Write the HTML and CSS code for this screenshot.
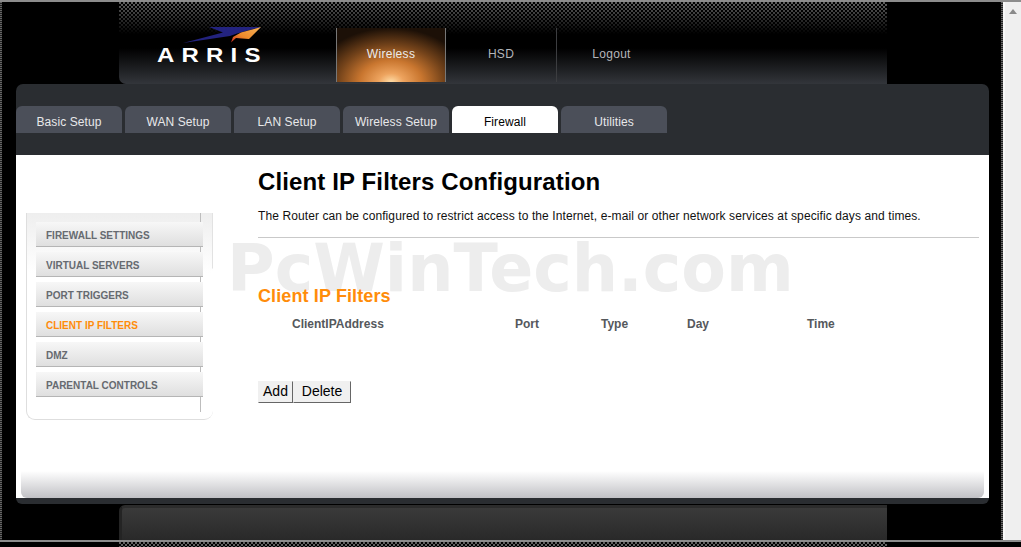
FILE: index.html
```html
<!DOCTYPE html>
<html lang="en">
<head>
<meta charset="utf-8">
<title>Client IP Filters Configuration</title>
<link rel="stylesheet" href="styles.css">
</head>
<body>
<div class="topline"></div>
<div class="window">
  <div class="edge"></div>
  <div class="viewport">
    <header class="masthead">
      <div class="logo">
        <svg class="swoosh" width="82" height="20" viewBox="180 25 82 20" aria-hidden="true">
          <polygon fill="#23237f" points="182,42 222,31.5 208,26 260,26 236,32.5 229,35"/>
          <polygon fill="url(#wing)" points="260,26 248,38 241,37.5 235,37 230,41.5 232,36 240,31.5"/>
          <defs>
            <linearGradient id="wing" x1="1" y1="0" x2="0" y2="1">
              <stop offset="0" stop-color="#f5b25a"/>
              <stop offset=".6" stop-color="#ee8a2a"/>
              <stop offset="1" stop-color="#c9281e"/>
            </linearGradient>
          </defs>
        </svg>
        <div class="brand">ARRIS</div>
      </div>
      <nav class="topnav">
        <a class="topitem active">Wireless</a>
        <a class="topitem">HSD</a>
        <a class="topitem">Logout</a>
      </nav>
    </header>
    <div class="panel">
      <nav class="tabs">
        <a class="tab">Basic Setup</a>
        <a class="tab">WAN Setup</a>
        <a class="tab">LAN Setup</a>
        <a class="tab">Wireless Setup</a>
        <a class="tab current">Firewall</a>
        <a class="tab">Utilities</a>
      </nav>
      <div class="sheet">
        <div class="watermark">PcWinTech.com</div>
        <div class="columns">
          <aside class="sidebar">
            <a class="side">FIREWALL SETTINGS</a>
            <a class="side">VIRTUAL SERVERS</a>
            <a class="side">PORT TRIGGERS</a>
            <a class="side on">CLIENT IP FILTERS</a>
            <a class="side">DMZ</a>
            <a class="side">PARENTAL CONTROLS</a>
          </aside>
          <main class="content">
            <h1 class="title">Client IP Filters Configuration</h1>
            <p class="desc">The Router can be configured to restrict access to the Internet, e-mail or other network services at specific days and times.</p>
            <hr class="rule">
            <h2 class="subtitle">Client IP Filters</h2>
            <div class="cols">
              <span>ClientIPAddress</span>
              <span>Port</span>
              <span>Type</span>
              <span>Day</span>
              <span>Time</span>
            </div>
            <div class="actions">
              <button class="btn add" type="button">Add</button>
              <button class="btn del" type="button">Delete</button>
            </div>
          </main>
        </div>
        <div class="sheetfoot"></div>
      </div>
      <div class="panelfoot"></div>
    </div>
    <div class="underbar"></div>
  </div>
  <div class="edge"></div>
  <div class="scrollbar">
    <svg class="arrow" width="8" height="5" viewBox="0 0 8 5" aria-hidden="true"><polygon fill="#8a8a8a" points="4,0 8,5 0,5"/></svg>
  </div>
</div>
<div class="bottomline"></div>
<div class="bottomstrip"><div class="dots"></div></div>
</body>
</html>
```
FILE: styles.css
```css
* { box-sizing: border-box; }
html, body { margin: 0; padding: 0; }
body {
  width: 1021px;
  height: 547px;
  overflow: hidden;
  background: #000;
  font-family: "Liberation Sans", Arial, sans-serif;
  display: flex;
  flex-direction: column;
}
.topline { height: 2px; background: #8c8c8c; flex: none; }
.window { display: flex; height: 538px; flex: none; }
.edge {
  width: 2px;
  flex: none;
  background: repeating-linear-gradient(to bottom, #666 0, #666 1px, #222 1px, #222 2px);
}
.viewport { width: 999px; flex: none; display: flex; flex-direction: column; }
.scrollbar {
  width: 18px;
  flex: none;
  background: #efefef;
  border-left: 2px solid #f8f8f8;
  display: flex;
  justify-content: center;
  padding-top: 7px;
}
.arrow { display: block; margin-left: -1px; }

.masthead {
  margin-left: 117px;
  width: 768px;
  height: 82px;
  flex: none;
  display: flex;
  border-bottom-left-radius: 7px;
  background-color: #000;
  background-image:
    linear-gradient(to bottom, rgba(0,0,0,0) 0, #000 32px, #000 46px, #0e0f10 56px, #33363b 82px),
    radial-gradient(circle at 1px 1px, #606060 1px, transparent 1.1px),
    radial-gradient(circle at 1px 1px, #606060 1px, transparent 1.1px);
  background-size: 100% 100%, 4px 4px, 4px 4px;
  background-position: 0 0, 0 0, 2px 2px;
}
.logo { width: 217px; flex: none; padding: 24px 0 0 38px; }
.swoosh { display: block; margin-left: 24px; }
.brand {
  color: #fff;
  font-size: 20px;
  line-height: 20px;
  font-weight: 700;
  letter-spacing: 6px;
  margin-top: -1px;
  transform: scaleX(1.2);
  transform-origin: left center;
}
.topnav { display: flex; }
.topitem {
  width: 110px;
  height: 54px;
  margin-top: 26px;
  border-left: 1px solid #3c3d40;
  color: #b4b6ba;
  font-size: 12px;
  letter-spacing: .3px;
  line-height: 52px;
  text-align: center;
}
.topitem.active {
  color: #ececec;
  background: radial-gradient(ellipse 78px 54px at 50% 100%, #ffdca6 0, #eda35e 16%, #c9762f 40%, #74431a 68%, #1c1007 100%);
  border-left-color: #777;
  border-right: 1px solid #777;
}
.topitem.active + .topitem { border-left: none; }

.panel {
  margin-left: 14px;
  width: 973px;
  height: 420px;
  flex: none;
  display: flex;
  flex-direction: column;
  background: #2a2d31;
  border-radius: 7px 7px 6px 6px;
}
.tabs { display: flex; gap: 3px; padding-top: 22px; height: 71px; flex: none; }
.tab {
  width: 106px;
  height: 27px;
  background: #4b4f59;
  border-radius: 6px 6px 0 0;
  color: #e8e8ea;
  font-size: 12px;
  letter-spacing: .1px;
  line-height: 33px;
  text-align: center;
}
.tab.current { background: #fff; color: #000; }
.sheet {
  position: relative;
  height: 343px;
  flex: none;
  background: #fff;
  display: flex;
  flex-direction: column;
}
.watermark {
  position: absolute;
  left: 211px;
  top: 74px;
  color: #ededed;
  font-family: "DejaVu Sans", sans-serif;
  font-weight: 700;
  font-size: 65px;
  line-height: 80px;
  white-space: nowrap;
}
.columns { position: relative; flex: 1; display: flex; }
.sidebar {
  width: 187px;
  height: 207px;
  margin: 58px 0 0 10px;
  flex: none;
  padding: 9px 10px 0 9px;
  border-left: 1px solid #dedede;
  border-bottom: 1px solid #dedede;
  border-radius: 0 0 9px 9px;
  background-color: #fff;
  background-image:
    linear-gradient(#bdbdbd, #bdbdbd),
    linear-gradient(to bottom, #e2e2e2, #e2e2e2 55px, rgba(226,226,226,0) 56px),
    linear-gradient(to bottom, #eeeeee, #ffffff 60px);
  background-size: 1px 199px, 1px 60px, 100% 60px;
  background-position: 173px 0, 185px 0, 0 0;
  background-repeat: no-repeat;
  display: flex;
  flex-direction: column;
  gap: 5px;
}
.side {
  height: 25px;
  width: 167px;
  flex: none;
  background: linear-gradient(to bottom, #f7f7f7, #dfdfdf);
  border-bottom: 1px solid #b5b5b5;
  color: #666a70;
  font-size: 10px;
  font-weight: 700;
  line-height: 28px;
  padding-left: 10px;
  white-space: nowrap;
}
.side.on { color: #ff8c0a; }
.content { position: relative; margin-left: 45px; width: 721px; flex: none; }
.title {
  margin: 12px 0 0;
  font-size: 24px;
  letter-spacing: .13px;
  line-height: 30px;
  font-weight: 700;
  color: #000;
}
.desc {
  margin: 12px 0 0;
  font-size: 12px;
  letter-spacing: .1px;
  line-height: 14px;
  color: #111;
  white-space: nowrap;
}
.rule { margin: 14px 0 0; border: 0; height: 1px; background: #c9c9c9; }
.subtitle {
  margin: 48px 0 0;
  font-size: 18px;
  letter-spacing: .12px;
  line-height: 20px;
  font-weight: 700;
  color: #ff8c0a;
}
.cols {
  display: grid;
  grid-template-columns: 223px 86px 86px 120px 1fr;
  padding-left: 34px;
  margin-top: 11px;
  font-size: 12px;
  line-height: 14px;
  font-weight: 700;
  color: #55585c;
}
.actions { display: flex; margin-top: 50px; }
.btn {
  height: 22px;
  padding: 0 0 2px;
  margin: 0;
  background: #f0f0f0;
  color: #000;
  font-family: "Liberation Sans", Arial, sans-serif;
  font-size: 14px;
  line-height: 18px;
  border: 1px solid;
  border-color: #f0f0f0 #666 #666 #f0f0f0;
}
.add { width: 35px; }
.del { width: 58px; }
.sheetfoot {
  height: 27px;
  flex: none;
  margin: 0 5px;
  border-radius: 0 0 6px 6px;
  background: linear-gradient(to bottom, #fff, #c1c1c5);
}
.panelfoot { height: 6px; flex: none; }
.underbar {
  margin: 1px 0 0 117px;
  width: 768px;
  height: 35px;
  flex: none;
  border-radius: 6px 0 0 0;
  background: linear-gradient(to bottom, #3a3a3a, #292929);
  border-top: 3px solid #2c2c2c;
  border-left: 3px solid #242424;
}
.bottomline { height: 2px; background: #8c8c8c; flex: none; }
.bottomstrip { height: 5px; flex: none; padding-left: 119px; display: flex; }
.dots {
  width: 768px;
  background-image:
    radial-gradient(circle at 1px 1px, #606060 1px, transparent 1.1px),
    radial-gradient(circle at 1px 1px, #606060 1px, transparent 1.1px);
  background-size: 4px 4px, 4px 4px;
  background-position: 0 0, 2px 2px;
}
```
